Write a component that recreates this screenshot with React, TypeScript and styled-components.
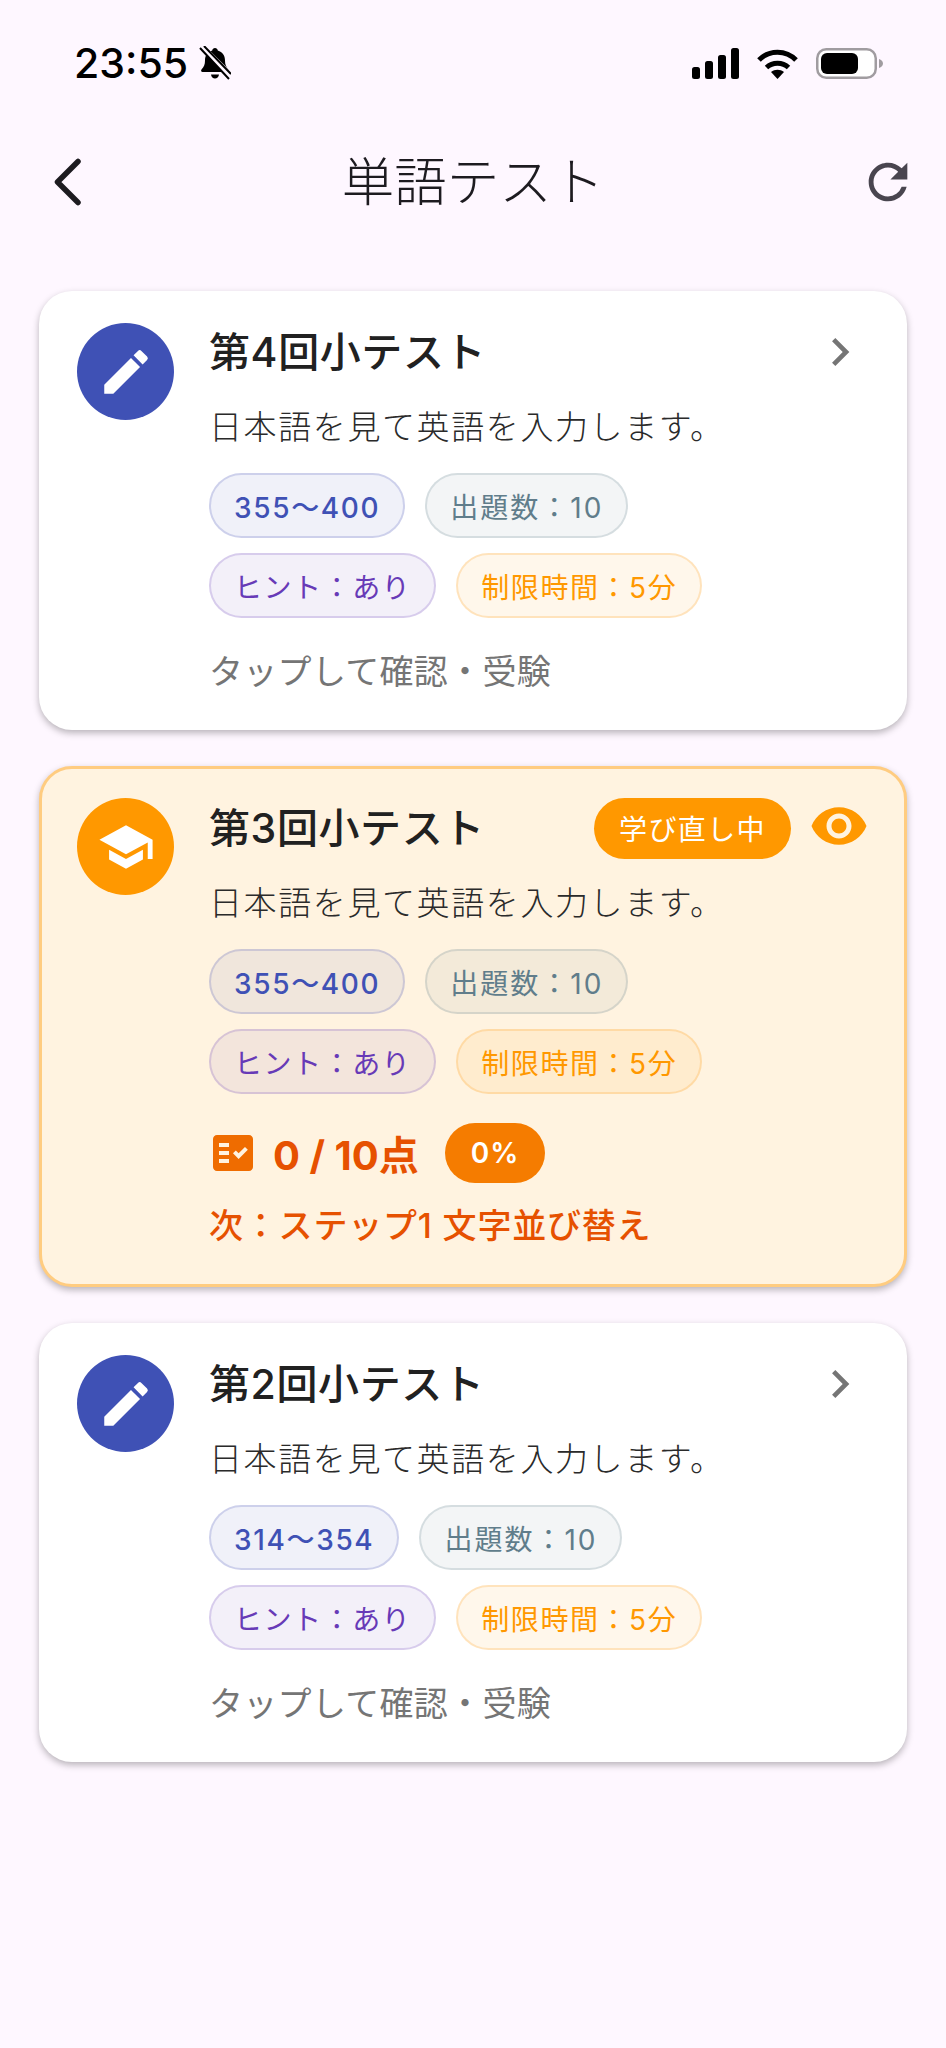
import { ReactElement } from "react";
import styled, { createGlobalStyle } from "styled-components";
import {
  MdChevronRight,
  MdEdit,
  MdFactCheck,
  MdRefresh,
  MdSchool,
  MdVisibility,
} from "react-icons/md";

const tests = [
  { id: 4, range: "355〜400", state: "idle" },
  { id: 3, range: "355〜400", state: "active" },
  { id: 2, range: "314〜354", state: "idle" },
];

const App = (): ReactElement => {
  return (
    <Page>
      <GlobalStyle />
      <StatusBar>
        <StatusLeft>
          <Time>23:55</Time>
          <BellOff />
        </StatusLeft>
        <StatusRight>
          <Signal />
          <Wifi />
          <Battery />
        </StatusRight>
      </StatusBar>

      <Header>
        <BackIcon />
        <h1>単語テスト</h1>
        <MdRefresh size={58} color="#49454f" />
      </Header>

      <CardList>
        {tests.map((test) => (
          <TestCard key={test.id} id={test.id} range={test.range} active={test.state === "active"} />
        ))}
      </CardList>
    </Page>
  );
};

const TestCard = ({ id, range, active }: { id: number; range: string; active: boolean }) => (
  <Card $active={active}>
    <IconCircle $active={active}>
      {active ? <MdSchool size={58} color="#fff" /> : <MdEdit size={58} color="#fff" />}
    </IconCircle>
    <CardBody>
      <TitleRow $active={active}>
        <Title>第{id}回小テスト</Title>
        {active ? (
          <>
            <StateBadge>学び直し中</StateBadge>
            <EyeIcon size={60} color="#ff9800" />
          </>
        ) : (
          <ArrowIcon size={56} color="#757575" />
        )}
      </TitleRow>
      <Description>日本語を見て英語を入力します。</Description>
      <ChipGrid>
        <ChipRow>
          <Chip $tone="63, 81, 181" $spacing={1.66} $strong>{range}</Chip>
          <Chip $tone="96, 125, 139" $spacing={2}>出題数：10</Chip>
        </ChipRow>
        <ChipRow>
          <Chip $tone="103, 58, 183" $spacing={1.55}>ヒント：あり</Chip>
          <Chip $tone="255, 152, 0" $spacing={1.55}>制限時間：5分</Chip>
        </ChipRow>
      </ChipGrid>
      {active ? (
        <>
          <ScoreRow>
            <MdFactCheck size={48} color="#ef6c00" />
            <Score>0 / 10点</Score>
            <Percent>0%</Percent>
          </ScoreRow>
          <NextStep>次：ステップ1 文字並び替え</NextStep>
        </>
      ) : (
        <Hint>タップして確認・受験</Hint>
      )}
    </CardBody>
  </Card>
);

const BellOff = () => (
  <svg width="32" height="34" viewBox="0 0 32 34" fill="none">
    <path
      d="M16 2c1.500 0 2.600 1 2.800 2.400C23.500 5.800 26 9.500 26 14.500c0 4 1 6.500 3.500 9 .8.900.4 2.500-1 2.500h-25c-1.400 0-1.800-1.600-1-2.500C5 21 6 18.500 6 14.500c0-5 2.500-8.700 7.200-10.100C13.400 3 14.500 2 16 2zM12 28.500h8c-.3 2.500-2 4-4 4s-3.700-1.500-4-4z"
      fill="#000"
    />
    <path d="M3 1l29 29" stroke="#fef7ff" strokeWidth="6" />
    <path d="M1 2l29 31M5 0l27 28" stroke="#000" strokeWidth="2" />
  </svg>
);

const Signal = () => (
  <svg width="47" height="31" viewBox="0 0 47 31" fill="#000">
    <rect x="0" y="19" width="8" height="12" rx="2.500" />
    <rect x="13" y="13" width="8" height="18" rx="2.500" />
    <rect x="26" y="7" width="8" height="24" rx="2.500" />
    <rect x="39" y="0" width="8" height="31" rx="2.500" />
  </svg>
);

const Wifi = () => (
  <svg width="41" height="31" viewBox="0 0 41 31" fill="none">
    <path d="M2 12C12 1.500 29 1.500 39 12" stroke="#000" strokeWidth="5" />
    <path d="M9.500 19.500c6-5.600 16-5.600 22 0" stroke="#000" strokeWidth="5" />
    <path d="M20.500 31l-6.500-7c3.800-3 9.200-3 13 0z" fill="#000" />
  </svg>
);

const Battery = () => (
  <svg width="67" height="31" viewBox="0 0 67 31" fill="none">
    <rect x="1.250" y="1.250" width="58.500" height="28.500" rx="9" stroke="#a09ca0" strokeWidth="2.500" fill="#fff" />
    <rect x="5" y="5" width="37" height="21" rx="6" fill="#000" />
    <path d="M63 11c2.400.8 4 2.400 4 4.500s-1.600 3.700-4 4.500z" fill="#a09ca0" />
  </svg>
);

const BackIcon = () => (
  <svg width="28" height="48" viewBox="0 0 28 48" fill="none">
    <path d="M25 3.500L4.500 24 25 44.500" stroke="#1d1b20" strokeWidth="5.500" strokeLinecap="round" strokeLinejoin="round" />
  </svg>
);

const GlobalStyle = createGlobalStyle`
  html,
  body {
    margin: 0;
    padding: 0;
    background: #fef7ff;
  }

  * {
    box-sizing: border-box;
  }
`;

const Page = styled.main`
  width: 946px;
  height: 2048px;
  overflow: hidden;
  background: #fef7ff;
  font-family: Inter, "Noto Sans CJK JP", sans-serif;
`;

const StatusBar = styled.div`
  display: flex;
  justify-content: space-between;
  align-items: center;
  height: 40px;
  margin-top: 43px;
  padding: 0 63px 0 74px;
`;

const StatusLeft = styled.div`
  display: flex;
  align-items: center;
  gap: 11px;
`;

const StatusRight = styled.div`
  display: flex;
  align-items: center;
  gap: 18px;
`;

const Time = styled.span`
  color: #000;
  font-family: Inter, sans-serif;
  font-size: 41px;
  font-weight: 500;
  line-height: 40px;
`;

const Header = styled.header`
  display: flex;
  justify-content: space-between;
  align-items: center;
  height: 60px;
  margin-top: 69px;
  padding: 0 29px 0 53px;

  > h1 {
    margin: 0 0 0 6px;
    color: #1d1b20;
    font-size: 52.5px;
    font-weight: 300;
    line-height: 60px;
  }
`;

const CardList = styled.section`
  display: flex;
  flex-direction: column;
  gap: 36px;
  margin: 79px 39px 0;
`;

const Card = styled.article<{ $active: boolean }>`
  display: flex;
  align-items: flex-start;
  gap: 35px;
  height: ${({ $active }) => ($active ? 521 : 439)}px;
  padding: ${({ $active }) => ($active ? "29px 35px 0" : "32px 38px 0")};
  border: ${({ $active }) => ($active ? "3px solid #ffcc80" : "none")};
  border-radius: 33px;
  background: ${({ $active }) => ($active ? "#fff3e0" : "#ffffff")};
  box-shadow: 0 3px 7px rgba(0, 0, 0, 0.28);
`;

const IconCircle = styled.div<{ $active: boolean }>`
  display: flex;
  flex: none;
  justify-content: center;
  align-items: center;
  width: 97px;
  height: 97px;
  border-radius: 50%;
  background: ${({ $active }) => ($active ? "#ff9800" : "#3f51b5")};
`;

const CardBody = styled.div`
  flex: 1;
  min-width: 0;
`;

const TitleRow = styled.div<{ $active: boolean }>`
  display: flex;
  align-items: center;
  height: 58px;
  margin-top: ${({ $active }) => ($active ? 1 : 0)}px;
`;

const Title = styled.h2`
  margin: 0;
  color: #212121;
  font-size: 41px;
  font-weight: 500;
  line-height: 58px;
  letter-spacing: 0.6px;
`;

const EyeIcon = styled(MdVisibility)`
  margin: 0 0 4px 18px;
`;

const ArrowIcon = styled(MdChevronRight)`
  margin-left: auto;
  margin-right: 1px;
`;

const StateBadge = styled.span`
  display: flex;
  align-items: center;
  height: 61px;
  margin-left: auto;
  padding: 0 25px;
  border-radius: 31px;
  background: #ff9800;
  color: #ffffff;
  font-size: 28px;
  letter-spacing: 1.400px;
`;

const Description = styled.p`
  margin: 23px 0 0;
  color: #2a2a2a;
  font-size: 33px;
  font-weight: 300;
  line-height: 46px;
  letter-spacing: 1.6px;
`;

const ChipGrid = styled.div`
  display: flex;
  flex-direction: column;
  gap: 15px;
  margin-top: 23px;
`;

const ChipRow = styled.div`
  display: flex;
  gap: 20px;
`;

const Chip = styled.span<{ $tone: string; $spacing: number; $strong?: boolean }>`
  display: flex;
  align-items: center;
  height: 65px;
  padding: 0 23px;
  border: 2px solid rgba(${({ $tone }) => $tone}, 0.2);
  border-radius: 33px;
  background: rgba(${({ $tone }) => $tone}, 0.08);
  color: rgb(${({ $tone }) => $tone});
  font-size: 28px;
  font-weight: ${({ $strong }) => ($strong ? 500 : 400)};
  letter-spacing: ${({ $spacing }) => $spacing}px;
`;

const ScoreRow = styled.div`
  display: flex;
  align-items: center;
  height: 60px;
  margin-top: 29px;
`;

const Score = styled.span`
  margin-left: 16px;
  color: #e65100;
  font-size: 40px;
  font-weight: 700;
`;

const Percent = styled.span`
  display: flex;
  align-items: center;
  height: 60px;
  margin-left: 26px;
  padding: 0 26px;
  border-radius: 30px;
  background: #f57c00;
  color: #ffffff;
  font-size: 28px;
  font-weight: 600;
  letter-spacing: 1px;
`;

const NextStep = styled.p`
  margin: 20px 0 0;
  color: #e65100;
  font-size: 34px;
  font-weight: 500;
  line-height: 46px;
  letter-spacing: 0.8px;
`;

const Hint = styled.p`
  margin: 31px 0 0;
  color: #757575;
  font-size: 34px;
  font-weight: 400;
  line-height: 46px;
  letter-spacing: 0.3px;
`;

export default App;
